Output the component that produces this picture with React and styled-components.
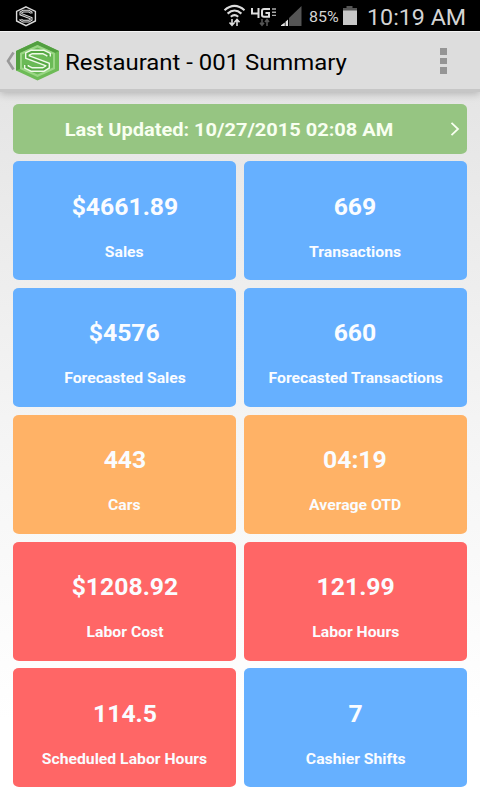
import React from 'react';
import styled, { createGlobalStyle } from 'styled-components';

const tones = {
  blue: '#66b0ff',
  orange: '#ffb266',
  red: '#ff6666',
};

const GlobalStyle = createGlobalStyle`
  * {
    box-sizing: border-box;
  }

  body {
    background: #fff;
    font-family: Roboto, 'Liberation Sans', sans-serif;
    margin: 0;
  }
`;

const Screen = styled.div`
  background: linear-gradient(#e5e5e5 90px, #f5f5f5 440px, #ffffff 720px);
  display: flex;
  flex-direction: column;
  height: 800px;
  overflow: hidden;
  width: 480px;
`;

const Wide = styled.span`
  display: block;
  flex: none;
  transform: scaleX(1.067);
  transform-origin: ${({ $origin }) => $origin || 'center'};
  white-space: nowrap;
`;

const StatusBar = styled.div`
  background: #000;
  display: flex;
  flex: none;
  height: 31px;
  justify-content: space-between;
  padding: 0 14px 0 15px;
`;

const StatusIcons = styled.div`
  display: flex;
`;

const Battery = styled(Wide)`
  color: #d4d4d4;
  font-size: 15px;
  line-height: 35px;
  margin-left: 7px;
  width: 33px;
`;

const Clock = styled(Wide)`
  color: #d4d4d4;
  font-size: 21.8px;
  line-height: 35px;
  margin-left: 9px;
  width: 99px;
`;

const ActionBar = styled.header`
  align-items: center;
  background: #dddddd;
  border-bottom: 3px solid #c6c6c6;
  border-top: 1px solid #f4f4f4;
  box-shadow: 0 2px 8px rgba(0, 0, 0, 0.22);
  display: flex;
  flex: none;
  height: 61px;
  padding: 0 33px 0 5px;
`;

const Title = styled.h1`
  color: #000;
  flex: 1;
  font-size: 22.4px;
  font-weight: 400;
  line-height: 30px;
  margin: 0 0 0 5px;
  padding-top: 2px;
`;

const MenuButton = styled.button`
  background: none;
  border: 0;
  display: grid;
  gap: 3px;
  margin: 1px 0 0;
  padding: 0;
`;

const MenuDot = styled.span`
  background: #959595;
  height: 6.5px;
  width: 7px;
`;

const Content = styled.main`
  display: flex;
  flex-direction: column;
  gap: 7.75px;
  padding: 11.6px 13.3px 0;
`;

const Banner = styled.div`
  align-items: center;
  background: #96c582;
  border-radius: 6px / 5px;
  color: #f8fff0;
  display: flex;
  flex: none;
  font-size: 18.75px;
  font-weight: 700;
  height: 50px;
  padding: 0 7px 0 0;
`;

const BannerText = styled.div`
  display: flex;
  flex: 1;
  justify-content: center;
  line-height: 24px;
  padding: 2px 6px 0 0;
`;

const Tiles = styled.div`
  display: grid;
  gap: 7.75px 8px;
  grid-auto-rows: 119px;
  grid-template-columns: 1fr 1fr;
`;

const Tile = styled.div`
  align-items: center;
  background: ${({ $tone }) => tones[$tone]};
  border-radius: 6px / 5px;
  color: #fafcff;
  display: flex;
  flex-direction: column;
  font-weight: 700;
  padding-top: 30.2px;
`;

const Value = styled(Wide)`
  font-size: 23.2px;
  line-height: 30px;
`;

const Label = styled(Wide)`
  font-size: 14.75px;
  line-height: 20px;
  margin-top: 20px;
`;

const StatusLogo = () => (
  <svg width="22" height="31" viewBox="0 0 22 31" fill="none">
    <path d="M11 6.8 20.4 11.4V21L11 25.6 1.6 21V11.4Z" stroke="#ddd" strokeWidth="1.4" />
    <path
      d="M16.2 13.4V12.6L13.8 11.2H8.2L5.8 12.6V14.2L16.2 18.2V19.8L13.8 21.2H8.2L5.8 19.8V19"
      stroke="#ddd"
      strokeWidth="2.7"
    />
    <path
      d="M16.2 13.4V12.6L13.8 11.2H8.2L5.8 12.6V14.2L16.2 18.2V19.8L13.8 21.2H8.2L5.8 19.8V19"
      stroke="#222"
      strokeWidth="0.8"
    />
  </svg>
);

const BrandLogo = () => (
  <svg width="45" height="42" viewBox="0 0 45 42" fill="none">
    <path d="M22.5 1 44 11V30.5L22.5 40.5 1 30.5V11Z" fill="#6dbb56" />
    <path d="M22.5 1 44 11 40 13 22.5 5 5 13V29L1 30.5V11Z" fill="#529f40" />
    <path d="M22.5 5 40 13V29L22.5 37 5 29V13Z" fill="#9ad685" />
    <path d="M22.5 7.5 38 14.5V27.5L22.5 34.5 7 27.5V14.5Z" fill="#6aba56" />
    <path
      d="M33.5 16.5V14.5L28.5 12H16.5L12.5 14V17L32.5 24.5V27L28.5 29.5H16.5L11.5 27V25"
      stroke="#f0faea"
      strokeWidth="5"
    />
    <path
      d="M33.5 17V14.5L28.5 12H16.5L12.5 14V17L32.5 24.5V27L28.5 29.5H16.5L11.5 27V24.5"
      stroke="#57a945"
      strokeWidth="2.2"
    />
  </svg>
);

const Wifi = () => (
  <svg width="23" height="31" viewBox="0 0 23 31" fill="none">
    <path
      d="M1.5 10.2Q11.5 1.5 21.5 10.2M4.6 13.6Q11.5 7.4 18.4 13.6M7.8 16.8Q11.5 13.6 15.2 16.8"
      stroke="#ddd"
      strokeWidth="2.1"
    />
    <path
      d="M9 19V25M6.5 22.5 9 25.3 11.5 22.5M14 26V20M11.5 22.3 14 19.5 16.5 22.3"
      stroke="#ddd"
      strokeWidth="1.6"
    />
  </svg>
);

const LteIcon = styled.svg`
  margin: 0 3px 0 4px;
`;

const Lte = () => (
  <LteIcon width="27" height="31" viewBox="0 0 27 31" fill="none">
    <path
      d="M2 8V13.5H9.5M8.5 8V18M20 9H14Q12 9 12 11V15Q12 16.8 14 16.8H19V13H15.5"
      stroke="#ddd"
      strokeWidth="2"
    />
    <path d="M22 9H26M22 12.2H26M22 15.4H26" stroke="#aaa" strokeWidth="1.4" />
    <path
      d="M12 19V25M10 22.8 12 25.3 14 22.8M17 26V20M15 22 17 19.5 19 22"
      stroke="#555"
      strokeWidth="1.6"
    />
  </LteIcon>
);

const Signal = () => (
  <svg width="22" height="31" viewBox="0 0 22 31">
    <path d="M21.5 6V26H9V18Z" fill="#555" />
    <path d="M8 19.5V26H5.5V21.8ZM4.8 22.6V26H1V25.2Z" fill="#e4e4e4" />
  </svg>
);

const BatteryIcon = () => (
  <svg width="16" height="31" viewBox="0 0 16 31">
    <path d="M4.5 6H10.5V8H15V11H1V8H4.5Z" fill="#555" />
    <path d="M1 10.5H15V25H1Z" fill="#c8c8c8" />
  </svg>
);

const metrics = [
  { value: '$4661.89', label: 'Sales', tone: 'blue' },
  { value: '669', label: 'Transactions', tone: 'blue' },
  { value: '$4576', label: 'Forecasted Sales', tone: 'blue' },
  { value: '660', label: 'Forecasted Transactions', tone: 'blue' },
  { value: '443', label: 'Cars', tone: 'orange' },
  { value: '04:19', label: 'Average OTD', tone: 'orange' },
  { value: '$1208.92', label: 'Labor Cost', tone: 'red' },
  { value: '121.99', label: 'Labor Hours', tone: 'red' },
  { value: '114.5', label: 'Scheduled Labor Hours', tone: 'red' },
  { value: '7', label: 'Cashier Shifts', tone: 'blue' },
];

const App = () => (
  <React.Fragment>
    <GlobalStyle />
    <Screen>
      <StatusBar>
        <StatusLogo />
        <StatusIcons>
          <Wifi />
          <Lte />
          <Signal />
          <Battery $origin="left">85%</Battery>
          <BatteryIcon />
          <Clock $origin="left">10:19 AM</Clock>
        </StatusIcons>
      </StatusBar>
      <ActionBar>
        <svg width="10" height="20" viewBox="0 0 10 20" fill="none">
          <path d="M8.5 1.5 3 10 8.5 18.5" stroke="#999" strokeWidth="2.6" />
        </svg>
        <BrandLogo />
        <Title>
          <Wide $origin="left">Restaurant - 001 Summary</Wide>
        </Title>
        <MenuButton aria-label="More options">
          <MenuDot />
          <MenuDot />
          <MenuDot />
        </MenuButton>
      </ActionBar>
      <Content>
        <Banner>
          <BannerText>
            <Wide>Last Updated: 10/27/2015 02:08 AM</Wide>
          </BannerText>
          <svg width="10" height="16" viewBox="0 0 10 16" fill="none">
            <path d="M1.5 1.8 8 8 1.5 14.2" stroke="#f8fff0" strokeWidth="1.8" />
          </svg>
        </Banner>
        <Tiles>
          {metrics.map(({ value, label, tone }) => (
            <Tile key={label} $tone={tone}>
              <Value>{value}</Value>
              <Label>{label}</Label>
            </Tile>
          ))}
        </Tiles>
      </Content>
    </Screen>
  </React.Fragment>
);

export default App;
